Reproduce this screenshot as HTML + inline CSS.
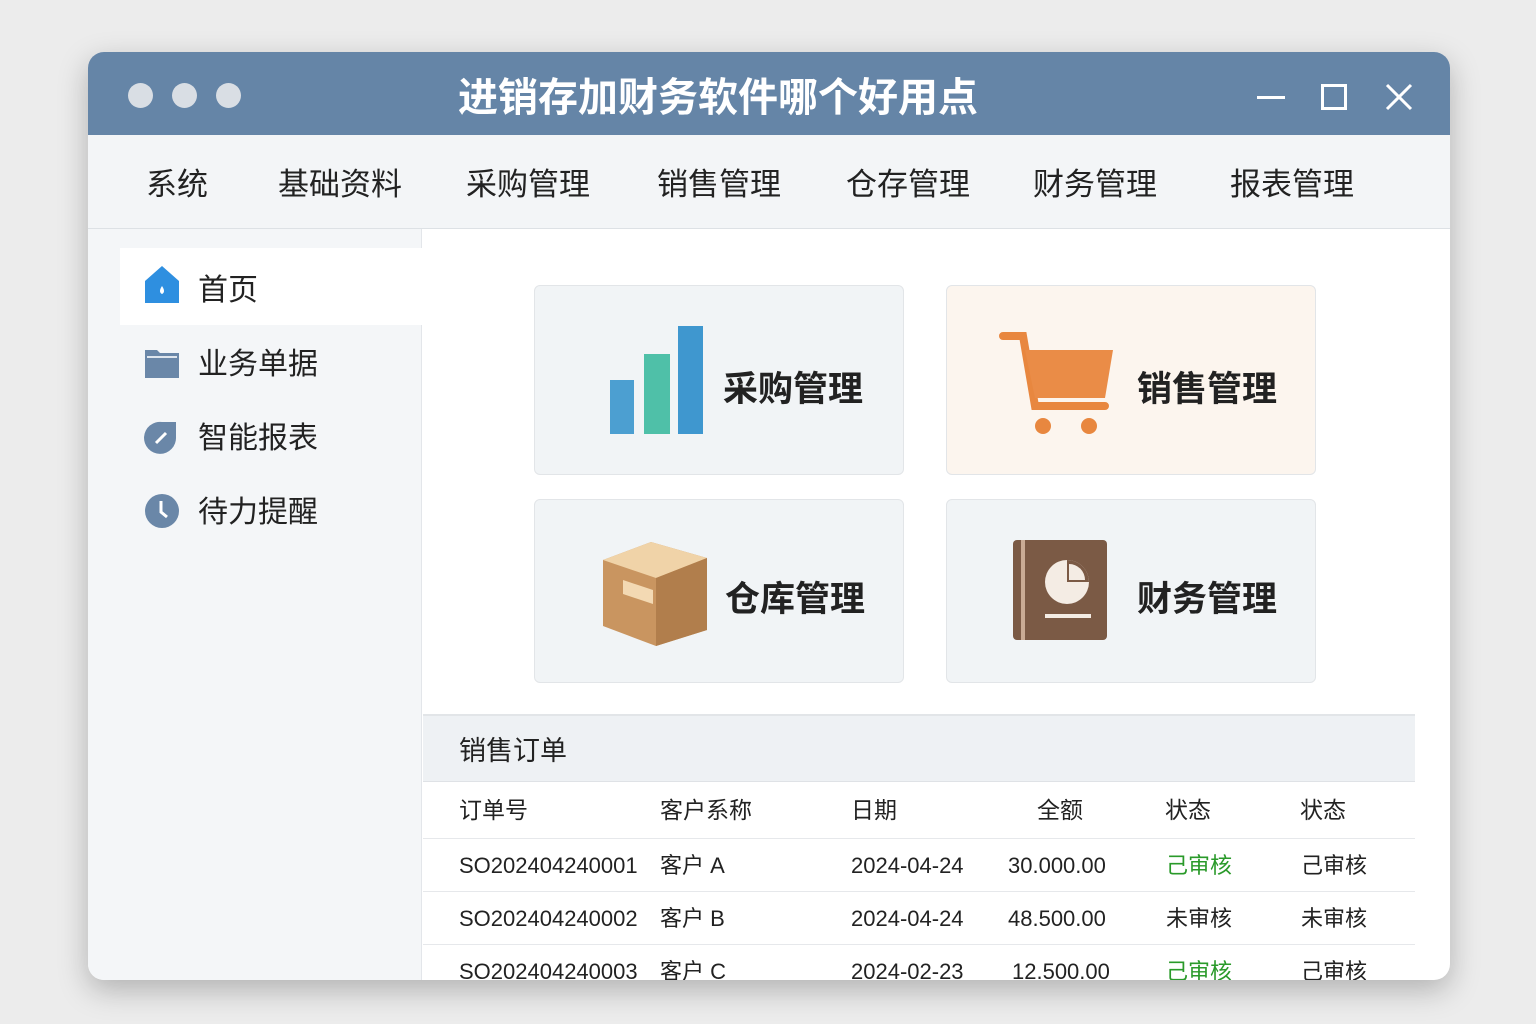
<!DOCTYPE html>
<html><head><meta charset="utf-8"><style>
*{margin:0;padding:0;box-sizing:border-box}
body{width:1536px;height:1024px;background:#ececec;font-family:"Liberation Sans","Noto Sans CJK SC",sans-serif;position:relative;overflow:hidden;color:#222}
span,div{line-height:1}
.win{position:absolute;left:88px;top:52px;width:1362px;height:928px;border-radius:16px;overflow:hidden;background:#fff;box-shadow:0 10px 30px rgba(0,0,0,.25)}
.title{position:absolute;left:0;top:0;width:100%;height:83px;background:#6585a7}
.dot{position:absolute;top:31px;width:25px;height:25px;border-radius:50%;background:#d9dee4}
.title h1{position:absolute;left:0;width:1260px;text-align:center;top:26px;font-size:40px;line-height:1;color:#fff;font-weight:bold;letter-spacing:0}
.menu{position:absolute;top:83px;left:0;width:100%;height:94px;background:#f3f5f7;border-bottom:1px solid #dde1e5}
.menu span{position:absolute;top:34px;font-size:31px;color:#222}
.side{position:absolute;top:177px;left:0;width:334px;bottom:0;background:#f4f6f8;border-right:1px solid #e3e6ea}
.act{position:absolute;left:32px;top:19px;width:302px;height:77px;background:#fff}
.si{position:absolute;left:110px;font-size:30px;color:#222}
.card{position:absolute;width:370px;border:1px solid #e2e5e8;border-radius:6px;background:#f1f4f6}
.card span{position:absolute;font-size:35px;font-weight:bold;color:#222}
.tbl{position:absolute;left:335px;top:662px;width:992px;height:300px}
.th{height:68px;background:#eef1f4;border-top:2px solid #e2e5e8;border-bottom:1px solid #dfe2e6;font-size:27px;padding:22px 0 0 36px}
.row{position:relative;height:53px;border-bottom:1px solid #e6e8eb;font-size:22px}
.row span{position:absolute;top:16px}
.g{color:#2a9a2a}
</style></head><body>
<div class="win">
<div class="title">
<div class="dot" style="left:40px"></div><div class="dot" style="left:84px"></div><div class="dot" style="left:128px"></div>
<h1>进销存加财务软件哪个好用点</h1>
<div style="position:absolute;left:1169px;top:44px;width:28px;height:3px;background:#fff"></div>
<div style="position:absolute;left:1233px;top:32px;width:26px;height:26px;border:3px solid #fff"></div>
<svg style="position:absolute;left:1296px;top:30px" width="30" height="30"><path d="M3 3L27 27M27 3L3 27" stroke="#fff" stroke-width="3"/></svg>
</div>
<div class="menu">
<span style="left:58px">系统</span><span style="left:190px">基础资料</span><span style="left:378px">采购管理</span><span style="left:569px">销售管理</span><span style="left:758px">仓存管理</span><span style="left:945px">财务管理</span><span style="left:1142px">报表管理</span>
</div>
<div class="side">
<div class="act"></div>
<svg style="position:absolute;left:56px;top:35px" width="36" height="40"><path d="M18 2L35 17V39H1V17Z" fill="#2e8fe0"/><path d="M18 22q-4 6 0 8q4-2 0-8" fill="#fff"/></svg>
<div class="si" style="top:47px">首页</div>
<svg style="position:absolute;left:56px;top:118px" width="36" height="32"><path d="M1 3h12l3 3h19v25H1Z" fill="#6a87a8"/><path d="M3 10h30" stroke="#dfe6ee" stroke-width="2"/></svg>
<div class="si" style="top:121px">业务单据</div>
<svg style="position:absolute;left:56px;top:190px" width="36" height="36"><path d="M18 3h14v15A16 16 0 1 1 18 3Z" fill="#6a87a8"/><path d="M12 24l10-10" stroke="#fff" stroke-width="3"/></svg>
<div class="si" style="top:195px">智能报表</div>
<svg style="position:absolute;left:56px;top:264px" width="36" height="36"><circle cx="18" cy="18" r="17" fill="#6a87a8"/><path d="M17 8v11l6 5" stroke="#fff" stroke-width="3" fill="none"/></svg>
<div class="si" style="top:269px">待力提醒</div>
</div>
<div class="card" style="left:446px;top:233px;height:190px">
<svg style="position:absolute;left:73px;top:38px" width="96" height="112"><rect x="2" y="56" width="24" height="54" fill="#4c9fd1"/><rect x="36" y="30" width="26" height="80" fill="#4fc0a8"/><rect x="70" y="2" width="25" height="108" fill="#3f97cf"/></svg>
<span style="left:188px;top:86px">采购管理</span></div>
<div class="card" style="left:858px;top:233px;height:190px;background:#fcf5ee">
<svg style="position:absolute;left:52px;top:44px" width="120" height="108"><path d="M4 6h20l12 70h70" stroke="#e8873f" stroke-width="8" fill="none" stroke-linecap="round"/><path d="M26 20h88l-8 48H36Z" fill="#ea8c47"/><circle cx="44" cy="96" r="8" fill="#e8873f"/><circle cx="90" cy="96" r="8" fill="#e8873f"/></svg>
<span style="left:190px;top:86px">销售管理</span></div>
<div class="card" style="left:446px;top:447px;height:184px">
<svg style="position:absolute;left:66px;top:38px" width="110" height="110"><path d="M2 22L50 4L106 20V92L55 108L2 88Z" fill="#c99560"/><path d="M2 22L55 40L106 20L50 4Z" fill="#f0d3a8"/><path d="M55 40V108L106 92V20Z" fill="#b17e4c"/><path d="M22 42l30 10v14l-30-10Z" fill="#f3d9b3"/></svg>
<span style="left:190px;top:82px">仓库管理</span></div>
<div class="card" style="left:858px;top:447px;height:184px">
<svg style="position:absolute;left:64px;top:38px" width="98" height="104"><rect x="2" y="2" width="94" height="100" rx="4" fill="#7b5a45"/><rect x="10" y="2" width="4" height="100" fill="#c9ab95"/><circle cx="56" cy="44" r="22" fill="#f4ece4"/><path d="M56 44V22a22 22 0 0 1 22 22Z" fill="#7b5a45"/><path d="M58 42V26a16 16 0 0 1 16 16Z" fill="#f4ece4"/><rect x="34" y="76" width="46" height="4" fill="#f4ece4"/></svg>
<span style="left:190px;top:82px">财务管理</span></div>
<div class="tbl">
<div class="th">销售订单</div>
<div class="row" style="height:57px;font-size:23px"><span style="left:36px;top:17px">订单号</span><span style="left:237px;top:17px">客户系称</span><span style="left:428px;top:17px">日期</span><span style="left:614px;top:17px">全额</span><span style="left:742px;top:17px">状态</span><span style="left:877px;top:17px">状态</span></div>
<div class="row"><span style="left:36px">SO202404240001</span><span style="left:237px">客户 A</span><span style="left:428px">2024-04-24</span><span style="left:585px">30.000.00</span><span class="g" style="left:743px">己审核</span><span style="left:878px">己审核</span></div>
<div class="row"><span style="left:36px">SO202404240002</span><span style="left:237px">客户 B</span><span style="left:428px">2024-04-24</span><span style="left:585px">48.500.00</span><span style="left:743px">未审核</span><span style="left:878px">未审核</span></div>
<div class="row"><span style="left:36px">SO202404240003</span><span style="left:237px">客户 C</span><span style="left:428px">2024-02-23</span><span style="left:589px">12.500.00</span><span class="g" style="left:743px">己审核</span><span style="left:878px">己审核</span></div>
</div>
</div>
</body></html>
